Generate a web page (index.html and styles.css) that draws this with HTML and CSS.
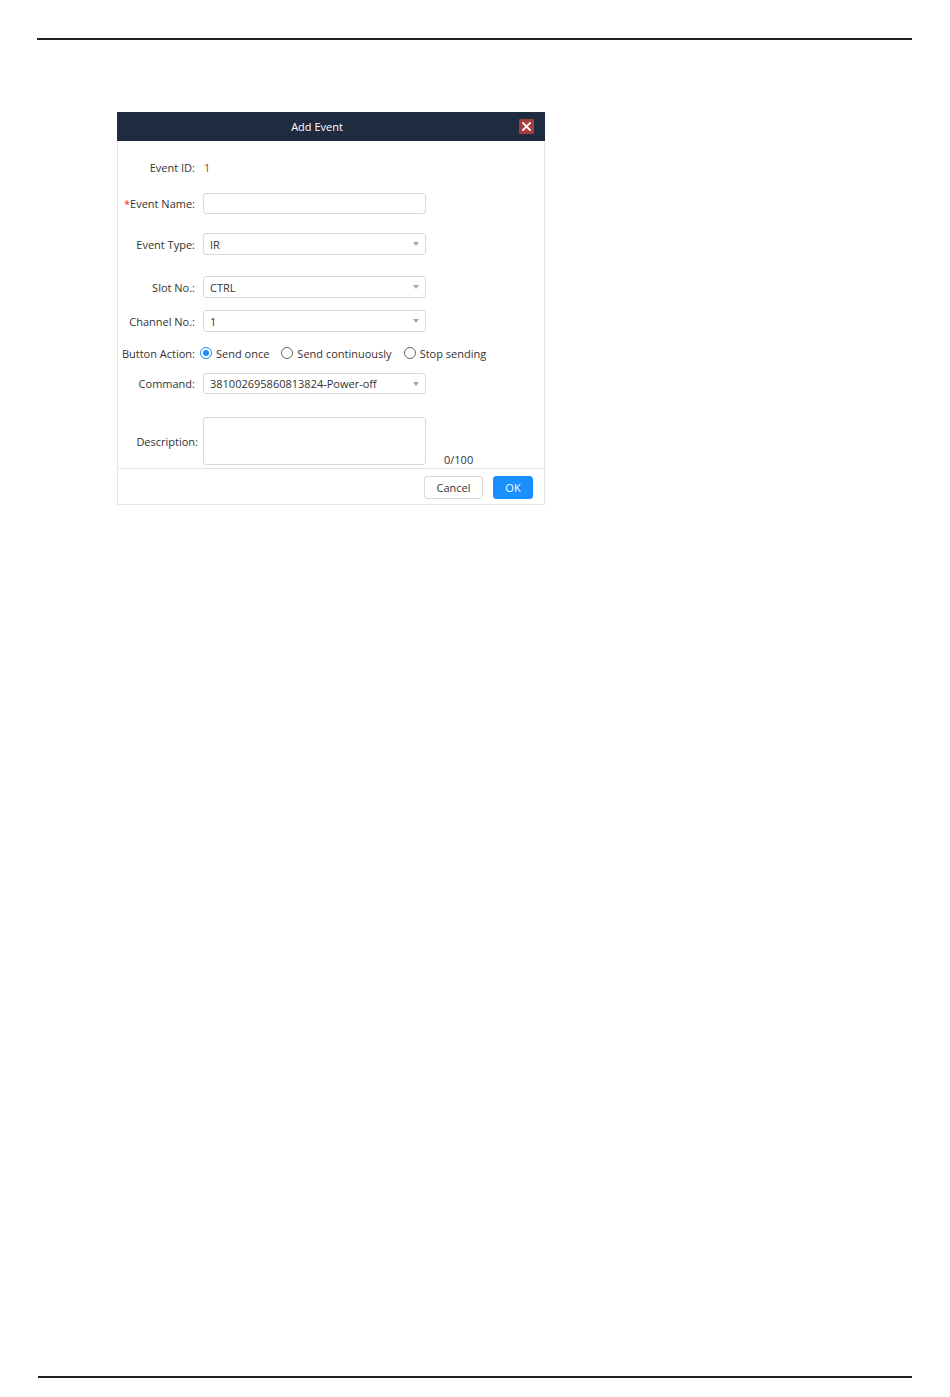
FILE: index.html
```html
<!DOCTYPE html>
<html lang="en">

<head>
    <meta charset="UTF-8">
    <meta name="viewport" content="width=device-width, initial-scale=1.0">
    <title>Add Event</title>
    <link rel="stylesheet" href="styles.css">
</head>

<body>
    <div class="page">
        <div class="rule"></div>

        <div class="dialog">
            <div class="dialog-header">
                <span class="dialog-title">Add Event</span>
                <button class="close-btn" aria-label="Close">
                    <svg width="9" height="9" viewBox="0 0 9 9">
                        <path d="M1 1 L8 8 M8 1 L1 8" stroke="#fff" stroke-width="1.8" stroke-linecap="square" />
                    </svg>
                </button>
            </div>

            <div class="dialog-body">
                <form class="event-form">
                    <div class="row row-id">
                        <label class="label">Event ID:</label>
                        <span class="value-id">1</span>
                    </div>
                    <div class="row row-name">
                        <label class="label"><span class="required">*</span>Event Name:</label>
                        <div class="field"></div>
                    </div>
                    <div class="row row-type">
                        <label class="label">Event Type:</label>
                        <div class="field select"><span>IR</span><i class="arrow"></i></div>
                    </div>
                    <div class="row row-slot">
                        <label class="label">Slot No.:</label>
                        <div class="field select"><span>CTRL</span><i class="arrow"></i></div>
                    </div>
                    <div class="row row-channel">
                        <label class="label">Channel No.:</label>
                        <div class="field select"><span>1</span><i class="arrow"></i></div>
                    </div>
                    <div class="row row-action">
                        <label class="label">Button Action:</label>
                        <div class="radios">
                            <span class="radio checked"><i class="dot"></i>Send once</span>
                            <span class="radio"><i class="dot"></i>Send continuously</span>
                            <span class="radio"><i class="dot"></i>Stop sending</span>
                        </div>
                    </div>
                    <div class="row row-command">
                        <label class="label">Command:</label>
                        <div class="field select"><span>381002695860813824-Power-off</span><i class="arrow"></i></div>
                    </div>
                    <div class="row row-desc">
                        <label class="label">Description:</label>
                        <div class="field textarea"></div>
                        <span class="counter">0/100</span>
                    </div>
                </form>

                <div class="dialog-footer">
                    <button class="btn btn-cancel">Cancel</button>
                    <button class="btn btn-ok">OK</button>
                </div>
            </div>
        </div>

        <div class="rule rule-bottom"></div>
    </div>
</body>

</html>
```

FILE: styles.css
```css
/* General Styles */

body {
    font-family: "Open Sans", "Noto Sans", Arial, sans-serif;
    margin: 0;
    padding: 0;
    background-color: #fff;
    color: #333;
}

.page {
    min-height: 1397px;
    box-sizing: border-box;
    display: flex;
    flex-direction: column;
    padding: 38px 38px 19px 37px;
}

.rule {
    border-top: 2px solid #1e1e1e;
}

.rule-bottom {
    margin-top: auto;
    margin-left: 1px;
}

/* Dialog */

.dialog {
    width: 428px;
    margin: 72px 0 0 80px;
    font-size: 11px;
}

.dialog-header {
    height: 29px;
    background-color: #1f2b3f;
    color: #fff;
    display: flex;
    align-items: center;
    justify-content: center;
    position: relative;
}

.dialog-title {
    font-size: 11px;
    margin-right: 28px;
}

.close-btn {
    position: absolute;
    right: 11px;
    top: 7px;
    width: 15px;
    height: 15px;
    padding: 0;
    border: none;
    border-radius: 1px;
    background-color: #a63c3c;
    display: flex;
    align-items: center;
    justify-content: center;
}

.dialog-body {
    border: 1px solid #e6e6e6;
    border-top: none;
}

.event-form {
    padding: 15px 0 0 0;
}

.row {
    display: flex;
    align-items: center;
    height: 22px;
}

.label {
    width: 77px;
    text-align: right;
    margin-right: 8px;
    white-space: nowrap;
    color: #333;
}

.required {
    color: #f5222d;
}

.value-id {
    color: #b3342c;
    margin-left: 1px;
}

.row-name { margin-top: 15px; height: 21px; }
.row-type { margin-top: 19px; }
.row-slot { margin-top: 21px; }
.row-channel { margin-top: 12px; }
.row-action { margin-top: 10px; }
.row-command { margin-top: 9px; height: 21px; }

.row-desc {
    margin-top: 23px;
    height: 48px;
    align-items: center;
}

.row-desc .label {
    width: 80px;
    margin-right: 5px;
}

.field {
    width: 223px;
    height: 100%;
    box-sizing: border-box;
    border: 1px solid #d9d9d9;
    border-radius: 3px;
    background-color: #fff;
}

.select {
    display: flex;
    align-items: center;
    justify-content: space-between;
    padding: 0 6px;
    color: #333;
}

.arrow {
    width: 0;
    height: 0;
    border-left: 3.5px solid transparent;
    border-right: 3.5px solid transparent;
    border-top: 4px solid #a6a6a6;
}

.counter {
    align-self: flex-end;
    margin-left: 18px;
    margin-bottom: -2px;
    color: #333;
}

/* Radios */

.radios {
    display: flex;
    align-items: center;
    margin-left: -3px;
    gap: 12px;
}

.radio {
    display: flex;
    align-items: center;
    gap: 4px;
    color: #333;
}

.dot {
    width: 10px;
    height: 10px;
    border: 1px solid #666;
    border-radius: 50%;
    box-sizing: content-box;
    position: relative;
    background-color: #fff;
}

.radio.checked .dot {
    border-color: #1890ff;
}

.radio.checked .dot::after {
    content: "";
    position: absolute;
    left: 2px;
    top: 2px;
    width: 6px;
    height: 6px;
    border-radius: 50%;
    background-color: #1890ff;
}

/* Footer */

.dialog-footer {
    margin-top: 3px;
    border-top: 1px solid #e6e6e6;
    display: flex;
    justify-content: flex-end;
    gap: 10px;
    padding: 7px 11px 5px 0;
}

.btn {
    height: 23px;
    font-family: inherit;
    font-size: 11px;
    border-radius: 3px;
    padding: 0;
    cursor: pointer;
}

.btn-cancel {
    width: 59px;
    border: 1px solid #d9d9d9;
    background-color: #fff;
    color: #333;
}

.btn-ok {
    width: 40px;
    border: 1px solid #1890ff;
    background-color: #1890ff;
    color: #fff;
}
```
